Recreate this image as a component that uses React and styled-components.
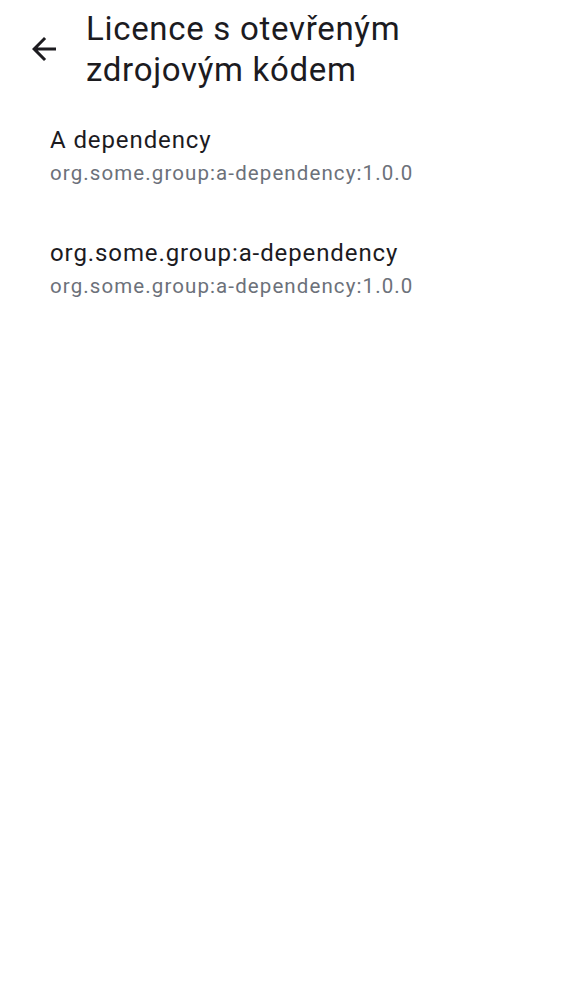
import React from 'react';
import styled, { createGlobalStyle } from 'styled-components';

const GlobalStyle = createGlobalStyle`
  html, body {
    margin: 0;
    padding: 0;
    background: #ffffff;
  }
  body {
    font-family: Roboto, "Noto Sans", sans-serif;
    color: #1c1b1f;
  }
`;

const Screen = styled.div`
  width: 562px;
  min-height: 1000px;
  background: #ffffff;
`;

const TopBar = styled.header`
  display: flex;
  align-items: flex-start;
  padding-top: 8px;
`;

const BackButton = styled.button`
  width: 36px;
  height: 36px;
  margin: 23px 0 0 26px;
  padding: 0;
  border: none;
  background: transparent;
  display: flex;
  align-items: center;
  justify-content: center;
  color: #1c1b1f;
`;

const Title = styled.h1`
  margin: 0 0 0 24px;
  font-size: 33px;
  font-weight: 400;
  line-height: 41px;
  letter-spacing: 0.7px;
  color: #1c1b1f;
`;

const List = styled.ul`
  list-style: none;
  margin: 0;
  padding: 35px 0 0 50px;
  display: flex;
  flex-direction: column;
  gap: 51px;
`;

const Item = styled.li`
  display: flex;
  flex-direction: column;
`;

const ItemName = styled.div`
  font-size: 24px;
  line-height: 30px;
  letter-spacing: 0.9px;
  color: #1c1b1f;
`;

const ItemCoord = styled.div`
  margin-top: 4px;
  font-size: 20.5px;
  line-height: 28px;
  letter-spacing: 1.1px;
  color: #6c717a;
`;

const ArrowBack = () => (
  <svg width="36" height="36" viewBox="0 0 24 24">
    <path
      fill="currentColor"
      d="M20 11H7.83l5.59-5.59L12 4l-8 8 8 8 1.41-1.41L7.83 13H20v-2z"
    />
  </svg>
);

const deps = [
  { name: 'A dependency', coord: 'org.some.group:a-dependency:1.0.0' },
  { name: 'org.some.group:a-dependency', coord: 'org.some.group:a-dependency:1.0.0' },
];

export default function App() {
  return (
    <Screen>
      <GlobalStyle />
      <TopBar>
        <BackButton aria-label="Zpět">
          <ArrowBack />
        </BackButton>
        <Title>
          Licence s otevřeným
          <br />
          zdrojovým kódem
        </Title>
      </TopBar>
      <List>
        {deps.map((d, i) => (
          <Item key={i}>
            <ItemName>{d.name}</ItemName>
            <ItemCoord>{d.coord}</ItemCoord>
          </Item>
        ))}
      </List>
    </Screen>
  );
}
